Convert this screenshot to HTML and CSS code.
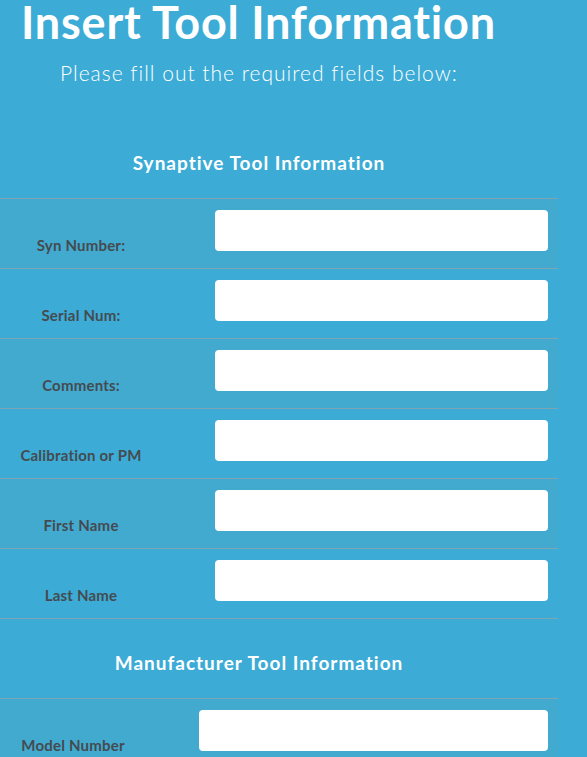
FILE: index.html
```html
<!DOCTYPE html>
<html lang="en">
<head>
<meta charset="utf-8">
<title>Insert Tool Information</title>
<link rel="stylesheet" href="styles.css">
</head>
<body>
<div class="page">
  <h1 class="title">Insert Tool Information</h1>
  <p class="subtitle">Please fill out the required fields below:</p>

  <section class="section section-syn">
    <h2 class="section-title">Synaptive Tool Information</h2>
    <div class="row striped"><label class="label">Syn Number:</label><div class="field"><input class="input" type="text"></div></div>
    <div class="row"><label class="label">Serial Num:</label><div class="field"><input class="input" type="text"></div></div>
    <div class="row striped"><label class="label">Comments:</label><div class="field"><input class="input" type="text"></div></div>
    <div class="row"><label class="label">Calibration or PM</label><div class="field"><input class="input" type="text"></div></div>
    <div class="row striped"><label class="label">First Name</label><div class="field"><input class="input" type="text"></div></div>
    <div class="row"><label class="label">Last Name</label><div class="field"><input class="input" type="text"></div></div>
  </section>

  <section class="section section-man">
    <h2 class="section-title">Manufacturer Tool Information</h2>
    <div class="row striped"><label class="label">Model Number</label><div class="field"><input class="input" type="text"></div></div>
  </section>
</div>
</body>
</html>
```
FILE: styles.css
```css
html, body {
  margin: 0;
  padding: 0;
  background: #3cacd6;
  overflow: hidden;
}
.page {
  width: 558px;
  font-family: Lato, "Open Sans", sans-serif;
  font-variant-ligatures: none;
}
.title {
  margin: 0;
  padding: 0 0 0 21px;
  font-size: 45px;
  line-height: 44px;
  font-weight: 700;
  letter-spacing: 0.8px;
  white-space: nowrap;
  color: #ffffff;
}
.subtitle {
  margin: 15px 0 0 0;
  padding-left: 60px;
  font-size: 21px;
  line-height: 28px;
  font-weight: 300;
  letter-spacing: 1px;
  white-space: nowrap;
  color: #ffffff;
}
.section-syn {
  margin-top: 31px;
}
.section-man {
  border-top: 1px solid #7ea3b3;
}
.section-title {
  box-sizing: border-box;
  margin: 0;
  height: 80px;
  padding: 33px 40px 0 0;
  text-align: center;
  font-size: 19px;
  line-height: 24px;
  font-weight: 700;
  letter-spacing: 1px;
  color: #ffffff;
}
.section-man .section-title {
  height: 79px;
  padding-top: 32px;
}
.row {
  box-sizing: border-box;
  display: flex;
  height: 70px;
  border-top: 1px solid #7ea3b3;
}
.row.striped {
  background: #43aacf;
}
.label {
  flex: none;
  width: 162px;
  padding-top: 37px;
  text-align: center;
  font-size: 15px;
  line-height: 18px;
  font-weight: 700;
  letter-spacing: 0.2px;
  color: #444b50;
}
.section-man .label {
  width: 146px;
}
.field {
  flex: 1;
  padding: 11px 10px 0 53px;
}
.input {
  display: block;
  box-sizing: border-box;
  width: 100%;
  height: 41px;
  margin: 0;
  border: none;
  border-radius: 4px;
  background: #ffffff;
}
```
